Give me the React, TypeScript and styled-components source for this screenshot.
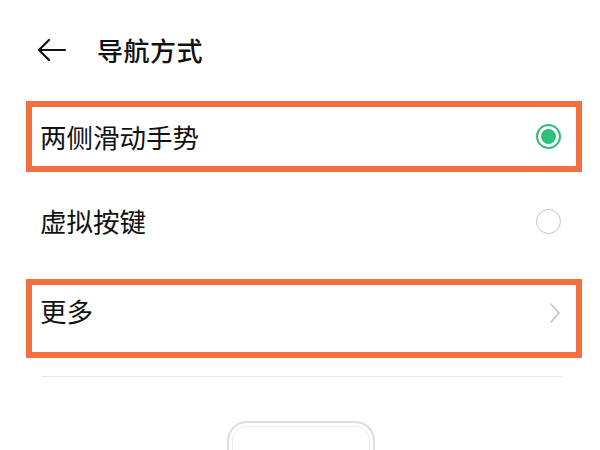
import * as React from "react"
import styled, { createGlobalStyle } from "styled-components"

const GlobalStyle = createGlobalStyle`
    html, body {
        margin: 0;
        padding: 0;
        background: #ffffff;
    }
    body {
        width: 600px;
        height: 450px;
        overflow: hidden;
        font-family: "Noto Sans CJK SC", "Noto Sans", sans-serif;
        color: #111111;
    }
`

const Page = styled.div`
    width: 600px;
    height: 450px;
    display: flex;
    flex-direction: column;
    overflow: hidden;

    & > * {
        flex-shrink: 0;
    }
`

const Header = styled.div`
    height: 101px;
    display: flex;
    align-items: center;
    padding-left: 37px;
    padding-bottom: 2px;
    box-sizing: border-box;
`

const BackButton = styled.div`
    width: 30px;
    height: 24px;
    display: flex;
    align-items: center;
    margin-right: 30px;
`

const Title = styled.div`
    font-size: 26px;
    font-weight: 500;
    letter-spacing: 0.5px;
`

const List = styled.div`
    margin-left: 26px;
    width: 556px;
    display: flex;
    flex-direction: column;
`

const Row = styled.div<{ $highlight?: boolean; $height: number; $top?: boolean }>`
    box-sizing: border-box;
    flex-shrink: 0;
    height: ${p => p.$height}px;
    display: flex;
    justify-content: space-between;
    align-items: ${p => (p.$top ? "flex-start" : "center")};
    padding: ${p => (p.$top ? "9px" : "0")} ${p => (p.$highlight ? 15 : 21)}px 0 ${p => (p.$highlight ? 8 : 14)}px;
    border: ${p => (p.$highlight ? "6px solid #f2703f" : "none")};
`

const Label = styled.div<{ $shift?: number }>`
    font-size: 26.5px;
    line-height: 34px;
    margin-top: ${p => p.$shift ?? 0}px;
`

const Radio = styled.div<{ $checked?: boolean }>`
    box-sizing: border-box;
    width: 25px;
    height: 25px;
    border-radius: 50%;
    border: ${p => (p.$checked ? "2px solid #2fbf78" : "1.5px solid #c4c4c4")};
    display: flex;
    align-items: center;
    justify-content: center;
    margin-top: ${p => (p.$checked ? "0" : "-8px")};

    &::after {
        content: "";
        display: ${p => (p.$checked ? "block" : "none")};
        width: 15px;
        height: 15px;
        border-radius: 50%;
        background: #2fbf78;
    }
`

const Chevron = styled.div`
    margin-top: 8px;
    margin-right: 0;
    display: flex;
`

const Divider = styled.div`
    margin: 18px 20px 0 42px;
    width: 520px;
    height: 1px;
    background: #e6e6e6;
`

const PhoneOutline = styled.div`
    margin: 44px 0 0 227px;
    width: 148px;
    height: 120px;
    box-sizing: border-box;
    border: 2px solid #dedede;
    border-radius: 20px;
    box-shadow: inset 0 0 0 3px #ffffff, inset 0 0 0 4px #ececec;
`

export default function App() {
    return (
        <Page>
            <GlobalStyle />
            <Header>
                <BackButton>
                    <svg width="30" height="24" viewBox="0 0 30 24" fill="none">
                        <path d="M28 12H3M12 2L2 12l10 10" stroke="#111" strokeWidth="2.2" strokeLinecap="round" strokeLinejoin="round" />
                    </svg>
                </BackButton>
                <Title>导航方式</Title>
            </Header>
            <List>
                <Row $highlight $height={71}>
                    <Label>两侧滑动手势</Label>
                    <Radio $checked />
                </Row>
                <Row $height={107}>
                    <Label $shift={-10}>虚拟按键</Label>
                    <Radio />
                </Row>
                <Row $highlight $top $height={79}>
                    <Label>更多</Label>
                    <Chevron>
                        <svg width="12" height="22" viewBox="0 0 12 22" fill="none">
                            <path d="M2 2l8 9-8 9" stroke="#c2c2c2" strokeWidth="1.6" strokeLinecap="round" strokeLinejoin="round" />
                        </svg>
                    </Chevron>
                </Row>
            </List>
            <Divider />
            <PhoneOutline />
        </Page>
    )
}
